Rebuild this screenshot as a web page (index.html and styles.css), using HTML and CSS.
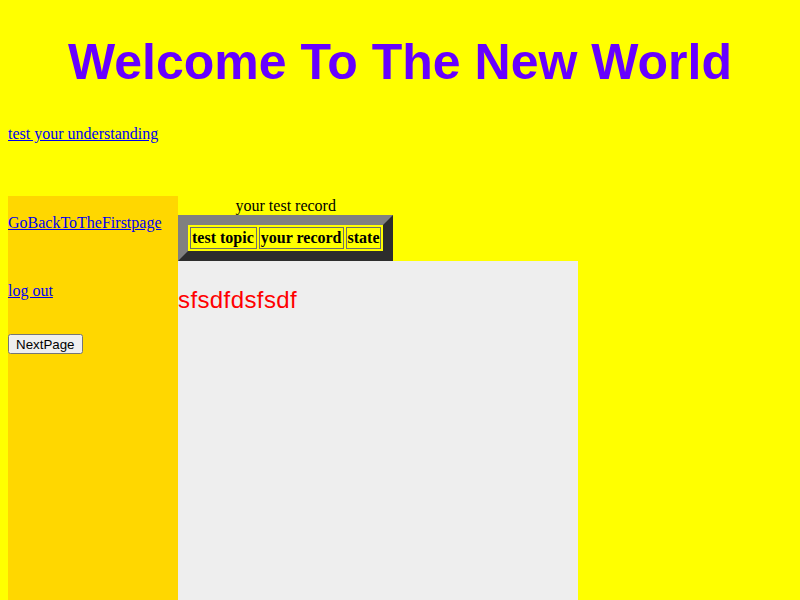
FILE: index.html
```html
<!DOCTYPE html>
<html>
<head>
<meta charset="utf-8">
<link rel="stylesheet" href="styles.css">
</head>
<body>
<div class="header">
  <h1 class="title">Welcome To The New World</h1>
</div>
<div class="topnav"><a href="#">test your understanding</a></div>
<div class="layout">
  <div class="sidebar">
    <p class="side-link first"><a href="#">GoBackToTheFirstpage</a></p>
    <p class="side-link second"><a href="#">log out</a></p>
    <button class="next-btn">NextPage</button>
  </div>
  <div class="main">
    <table class="record">
      <caption>your test record</caption>
      <tr>
        <th>test topic</th>
        <th>your record</th>
        <th>state</th>
      </tr>
    </table>
    <div class="panel">
      <p class="msg">sfsdfdsfsdf</p>
    </div>
  </div>
</div>
</body>
</html>
```

FILE: styles.css
```css
html, body {
  margin: 0;
  padding: 0;
}
body {
  background: #ffff00;
  padding: 0 8px;
  font-family: "Liberation Serif", "Times New Roman", serif;
  font-size: 16px;
}
.header {
  padding-top: 31px;
}
.title {
  margin: 0;
  font-family: "Liberation Sans", Arial, sans-serif;
  font-weight: bold;
  font-size: 50px;
  line-height: 62px;
  color: #6600ff;
  text-align: center;
}
.topnav {
  margin-top: 32px;
  line-height: 18px;
}
a {
  color: #0000ee;
}
.layout {
  display: flex;
  margin-top: 53px;
  align-items: flex-start;
}
.sidebar {
  width: 170px;
  height: 420px;
  background: #ffd700;
  padding-top: 18px;
  box-sizing: border-box;
}
.side-link {
  margin: 0;
  line-height: 18px;
}
.side-link.second {
  margin-top: 50px;
}
.next-btn {
  margin-top: 34px;
  font-family: "Liberation Sans", Arial, sans-serif;
  font-size: 13.33px;
  padding: 1px 6px;
  height: 20px;
}
.main {
  width: 400px;
}
.record {
  border-collapse: separate;
  border-spacing: 2px;
  border-style: solid;
  border-width: 10px;
  border-color: #808080 #2d2d2d #2d2d2d #808080;
  background: #ffff00;
}
.record caption {
  line-height: 19px;
}
.record th {
  background: #ffff00;
  border: 1px solid #6e6e6e;
  padding: 1px;
  font-weight: bold;
  line-height: 18px;
}
.record th:first-child {
  padding-right: 2px;
}
.panel {
  background: #eeeeee;
  height: 400px;
  overflow: hidden;
}
.msg {
  margin: 25px 0 0;
  color: #ff0000;
  font-family: "Liberation Sans", Arial, sans-serif;
  font-size: 24px;
  letter-spacing: 0.4px;
  line-height: 28px;
}
```
